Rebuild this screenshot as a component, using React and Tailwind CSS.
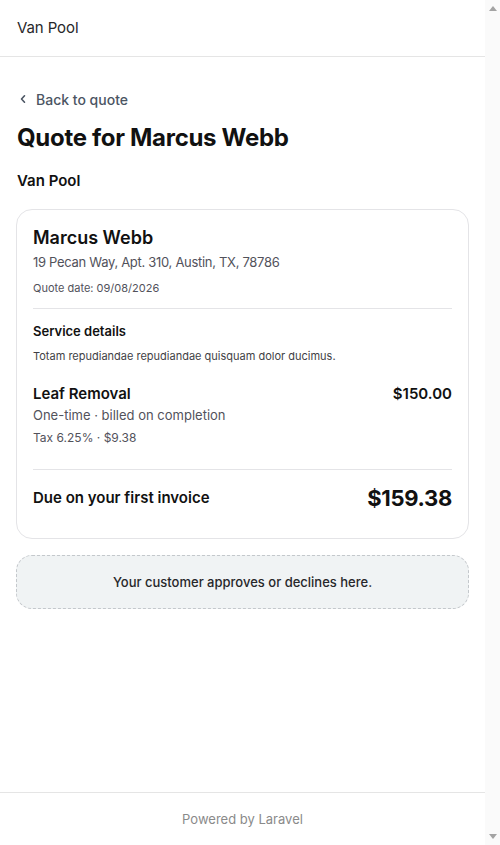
import React from "react";

export default function App() {
  return (
    <div
      className="h-screen flex bg-white text-[#18181b] overflow-hidden"
      style={{ fontFamily: "Inter, 'Noto Sans', sans-serif" }}
    >
      <div className="w-[485px] shrink-0 flex flex-col">
        <header className="h-[57px] shrink-0 border-b border-[#e5e5e5] px-4 flex items-center">
          <span className="text-[15px] text-[#27272a] tracking-[-0.1px] ml-px">Van Pool</span>
        </header>

        <main className="px-4 pt-8">
          <div className="flex items-center h-5 text-[14px] font-medium text-[#4b5563]">
            <svg width="8" height="10" viewBox="0 0 8 10" className="ml-[3px] mr-[9px]" fill="none">
              <path d="M5.5 1.8 L2.5 5 L5.5 8.2" stroke="#4b5563" strokeWidth="1.6" strokeLinecap="round" strokeLinejoin="round" />
            </svg>
            <span>Back to quote</span>
          </div>

          <h1 className="mt-[14px] text-[24px] leading-[30px] font-bold tracking-[-0.3px] text-[#111] ml-px">
            Quote for Marcus Webb
          </h1>
          <div className="mt-[17px] text-[15px] leading-[22px] font-semibold text-[#111] ml-px">Van Pool</div>

          <section className="mt-[17px] rounded-2xl border border-[#e4e4e7] px-[16px] pt-[15px] pb-[26px]">
            <div className="text-[18px] leading-[26px] font-semibold text-[#111]">Marcus Webb</div>
            <div className="mt-[1px] text-[13px] leading-5 text-[#52525b] tracking-[-0.3px]">
              19 Pecan Way, Apt. 310, Austin, TX, 78786
            </div>
            <div className="mt-2 text-[11px] leading-4 text-[#52525b]">Quote date: 09/08/2026</div>

            <div className="mt-3 h-px bg-[#e4e4e7]" />

            <div className="mt-3 text-[13px] leading-5 font-semibold text-[#111]">Service details</div>
            <div className="mt-[7px] text-[11px] leading-4 text-[#3f3f46]">
              Totam repudiandae repudiandae quisquam dolor ducimus.
            </div>

            <div className="mt-[19px] flex items-start justify-between">
              <div className="text-[15px] leading-[22px] font-semibold text-[#111]">Leaf Removal</div>
              <div className="text-[15px] leading-[22px] font-semibold text-[#111]">$150.00</div>
            </div>
            <div className="text-[13px] leading-5 text-[#52525b]">One-time · billed on completion</div>
            <div className="mt-1 text-[12px] leading-[18px] text-[#52525b]">Tax 6.25% · $9.38</div>

            <div className="mt-[22px] h-px bg-[#e4e4e7]" />

            <div className="mt-[14px] flex items-center justify-between">
              <div className="text-[15px] leading-[22px] font-semibold text-[#111]">Due on your first invoice</div>
              <div className="text-[22px] leading-[28px] font-bold text-[#111] tracking-[-0.3px]">$159.38</div>
            </div>
          </section>

          <div className="mt-[16px] rounded-2xl border border-dashed border-[#c4c8cc] bg-[#f0f3f4] py-4 text-center text-[13px] leading-5 font-medium text-[#27272a]">
            Your customer approves or declines here.
          </div>
        </main>

        <footer className="mt-auto shrink-0 border-t border-[#e5e5e5] py-4 text-center text-[13px] leading-5 text-[#8a8a8a]">
          Powered by Laravel
        </footer>
      </div>

      <div className="w-[15px] shrink-0 bg-[#fafafa] flex flex-col items-center justify-between py-[6px]">
        <svg width="8" height="5" viewBox="0 0 8 5">
          <path d="M4 0 L8 5 L0 5 Z" fill="#a3a3a3" />
        </svg>
        <svg width="8" height="5" viewBox="0 0 8 5">
          <path d="M0 0 L8 0 L4 5 Z" fill="#a3a3a3" />
        </svg>
      </div>
    </div>
  );
}
